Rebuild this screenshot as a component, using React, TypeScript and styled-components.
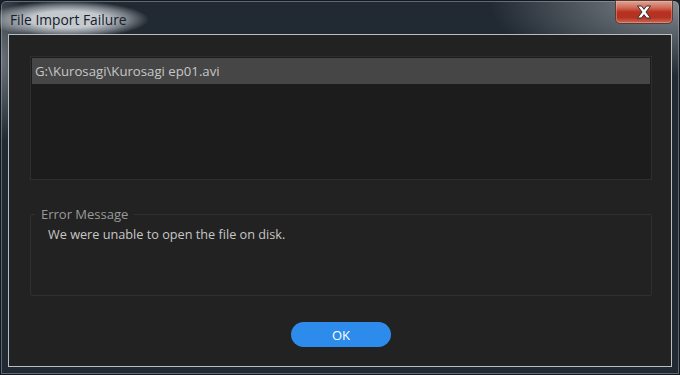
import React from 'react'
import styled, { createGlobalStyle } from 'styled-components'

const GlobalStyle = createGlobalStyle`
	html, body {
		margin: 0;
		padding: 0;
		background: #1b2128;
	}
	body {
		font-family: 'Open Sans', 'Liberation Sans', sans-serif;
	}
	* {
		box-sizing: border-box;
	}
`

const palette = {
	frame: '#212a33',
	client: '#222222',
	clientEdge: '#b8bec4',
	listBg: '#1c1c1c',
	listBorder: '#2e2e2e',
	selected: '#464646',
	text: '#c6c6c6',
	muted: '#9a9a9a',
	blue: '#2d8ceb',
}

const files = ['G:\\Kurosagi\\Kurosagi ep01.avi']

const CloseIcon = () => (
	<svg width="16" height="14" viewBox="0 0 16 14">
		<path
			d="M1.5 1 H5.5 L8 4.3 L10.5 1 H14.5 L10 7 L14.5 13 H10.5 L8 9.7 L5.5 13 H1.5 L6 7 Z"
			fill="#ffffff"
			stroke="#3a2a2a"
			strokeWidth="1"
			strokeLinejoin="round"
		/>
	</svg>
)

const App = () => {
	return (
		<>
			<GlobalStyle />
			<Window>
				<TitleBar>
					<Title>File Import Failure</Title>
					<CloseButton aria-label="Close">
						<CloseIcon />
					</CloseButton>
				</TitleBar>
				<Client>
					<FileList>
						{files.map((item, index) => (
							<FileRow key={index} selected={index === 0}>
								{item}
							</FileRow>
						))}
					</FileList>
					<Group>
						<Legend>Error Message</Legend>
						<Message>We were unable to open the file on disk.</Message>
					</Group>
					<Footer>
						<OkButton>OK</OkButton>
					</Footer>
				</Client>
			</Window>
		</>
	)
}

const Window = styled.div`
	width: 680px;
	height: 375px;
	display: flex;
	flex-direction: column;
	padding: 0 7px 7px 7px;
	border: 1px solid #14181d;
	border-radius: 6px 6px 0 0;
	box-shadow: inset 0 0 0 1px rgba(170, 180, 192, 0.45);
	background:
		radial-gradient(ellipse 190px 75px at 100% 0%, rgba(150, 156, 162, 0.85), rgba(150, 156, 162, 0) 100%),
		radial-gradient(ellipse 30px 80px at 0% 60px, rgba(200, 205, 210, 0.45), rgba(200, 205, 210, 0) 100%),
		${palette.frame};
`

const TitleBar = styled.div`
	height: 33px;
	display: flex;
	align-items: flex-start;
	justify-content: space-between;
`

const Title = styled.div`
	margin: 0 0 0 -22px;
	padding: 10px 22px 10px 24px;
	font-family: 'Open Sans', 'Liberation Sans', sans-serif;
	font-size: 13.8px;
	line-height: 17px;
	color: #15202a;
	background: radial-gradient(closest-side, rgba(205, 210, 215, 0.95) 45%, rgba(205, 210, 215, 0.5) 75%, rgba(205, 210, 215, 0) 100%);
`

const CloseButton = styled.button`
	width: 58px;
	height: 24px;
	margin-top: -1px;
	margin-right: -1px;
	padding: 0;
	display: flex;
	align-items: center;
	justify-content: center;
	border: 1px solid #5b3b36;
	border-radius: 0 0 5px 5px;
	box-shadow: inset 0 0 0 1px rgba(255, 200, 190, 0.35);
	background: linear-gradient(180deg, #dca596 0%, #cf6b57 30%, #b9301f 50%, #b23322 75%, #cc6a55 100%);
	cursor: pointer;
`

const Client = styled.div`
	flex: 1;
	display: flex;
	flex-direction: column;
	padding: 21px 19px 19px 21px;
	border: 1px solid ${palette.clientEdge};
	background: ${palette.client};
`

const FileList = styled.ul`
	list-style: none;
	margin: 0;
	height: 124px;
	padding: 1px;
	border: 1px solid ${palette.listBorder};
	background: ${palette.listBg};
`

const FileRow = styled.li<{ selected?: boolean }>`
	height: 26px;
	display: flex;
	align-items: center;
	padding-left: 3px;
	font-size: 13.2px;
	color: ${palette.text};
	background: ${({ selected }) => (selected ? palette.selected : 'transparent')};
`

const Group = styled.fieldset`
	margin: 26px 0 0 0;
	height: 90px;
	padding: 0 6px 0 4px;
	border: 1px solid #303030;
	border-radius: 2px;
	min-width: 0;
`

const Legend = styled.legend`
	padding: 0 6px;
	font-size: 13px;
	line-height: 16px;
	color: ${palette.muted};
`

const Message = styled.div`
	padding: 3px 0 0 13px;
	font-size: 12.7px;
	line-height: 18px;
	color: ${palette.text};
`

const Footer = styled.div`
	display: flex;
	justify-content: center;
	margin-top: 26px;
`

const OkButton = styled.button`
	width: 100px;
	height: 25px;
	border: none;
	border-radius: 13px;
	background: ${palette.blue};
	color: #ffffff;
	font-family: 'Open Sans', 'Liberation Sans', sans-serif;
	font-size: 13px;
	cursor: pointer;
`

export default App
